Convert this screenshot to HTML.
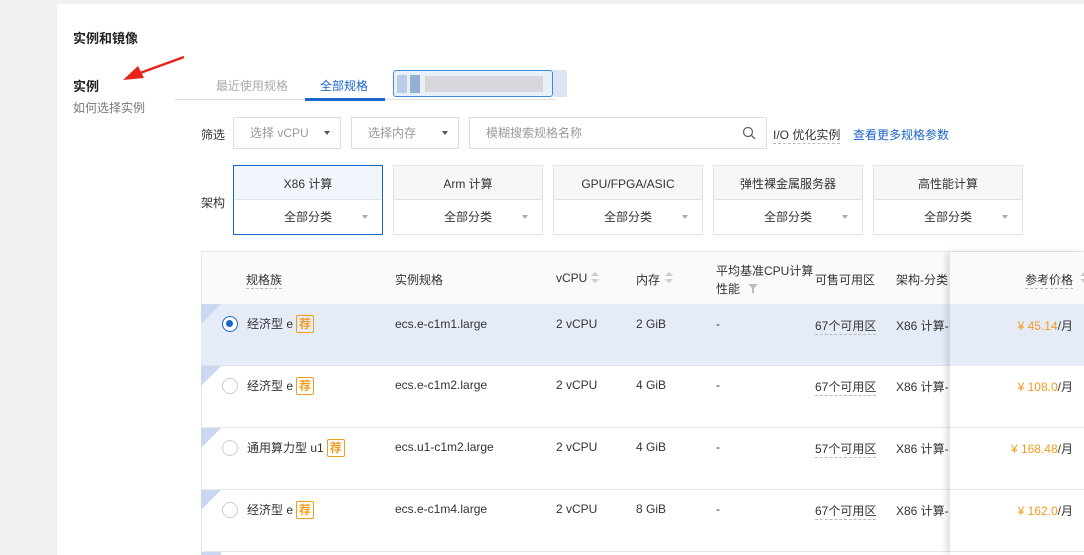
<!DOCTYPE html>
<html><head><meta charset="utf-8"><style>
*{margin:0;padding:0;box-sizing:border-box}
body{width:1084px;height:555px;overflow:hidden;background:#f0f1f3;font-family:"Liberation Sans","Noto Sans CJK SC",sans-serif;font-size:12px;color:#333;position:relative}
.a{position:absolute;white-space:nowrap}
#panel{position:absolute;left:57px;top:4px;width:1027px;height:551px;background:#fff}
.sel{position:absolute;border:1px solid #ddd;background:#fff;color:#999;height:32px;line-height:30px;padding-left:16px}
.tri{position:absolute;width:0;height:0;border-left:3.5px solid transparent;border-right:3.5px solid transparent;border-top:4px solid #555}
.tri.g{border-top-color:#aaa}
.card{position:absolute;top:165px;width:150px;height:70px;border:1px solid #e3e3e3;text-align:center;color:#333}
.card .t{height:34px;line-height:36px;background:#f7f7f7;border-bottom:1px solid #e3e3e3}
.card .b{height:34px;line-height:34px;position:relative}
.card.on{border-color:#1b64c9}
.card.on .t{background:#f1f5fc;border-bottom-color:#dce5f3}
.row{position:absolute;left:201px;width:883px;height:62px;border-bottom:1px solid #e8e8e8}
.corner{position:absolute;left:0;top:0;width:0;height:0;border-top:20px solid #c9d7f1;border-right:20px solid transparent}
.radio{position:absolute;left:21px;top:12px;width:16px;height:16px;border:1px solid #ccc;border-radius:50%;background:#fff}
.tag{display:inline-block;border:1px solid #f39c1f;color:#f39c1f;font-size:12px;line-height:16px;padding:0 2px;margin-left:3px;border-radius:2px;font-weight:bold}
.dash{border-bottom:1px dashed #bbb}
.pr{color:#f39c1f}
.sort{position:absolute;width:0;height:0;border-left:4px solid transparent;border-right:4px solid transparent}
</style></head><body>
<div id="panel"></div>
<div class="a" style="left:73px;top:28px;font-size:13px;font-weight:bold;color:#222">实例和镜像</div>
<div class="a" style="left:73px;top:76px;font-size:13px;font-weight:bold;color:#222">实例</div>
<div class="a" style="left:73px;top:99px;color:#777">如何选择实例</div>
<svg class="a" style="left:118px;top:54px" width="70" height="30"><path d="M66 3 L22 19" stroke="#e8231b" stroke-width="2.5"/><path d="M5 26 L20 12 L26 24 Z" fill="#e8231b"/></svg>
<div class="a" style="left:216px;top:77px;color:#aaa">最近使用规格</div>
<div class="a" style="left:320px;top:77px;color:#1b64c9">全部规格</div>
<div class="a" style="left:175px;top:99px;width:380px;height:1px;background:#ddd"></div>
<div class="a" style="left:305px;top:98px;width:80px;height:3px;background:#1b64c9"></div>
<div class="a" style="left:393px;top:70px;width:160px;height:27px;border:1px solid #3a8de0;border-radius:3px;background:#eaf0f8"></div>
<div class="a" style="left:397px;top:75px;width:10px;height:18px;background:#b8cde8"></div>
<div class="a" style="left:410px;top:75px;width:10px;height:18px;background:#93afd3"></div>
<div class="a" style="left:425px;top:76px;width:118px;height:16px;background:#d8d8dc"></div>
<div class="a" style="left:553px;top:70px;width:14px;height:27px;background:#dfe4f2"></div>
<div class="a" style="left:201px;top:126px;color:#333">筛选</div>
<div class="sel" style="left:233px;top:117px;width:108px">选择 vCPU<div class="tri" style="left:90px;top:13px"></div></div>
<div class="sel" style="left:351px;top:117px;width:108px">选择内存<div class="tri" style="left:90px;top:13px"></div></div>
<div class="sel" style="left:469px;top:117px;width:298px;padding-left:16px">模糊搜索规格名称
<svg style="position:absolute;left:272px;top:8px" width="14" height="14"><circle cx="6" cy="6" r="4.5" stroke="#666" stroke-width="1.3" fill="none"/><path d="M9.3 9.3 L13 13" stroke="#666" stroke-width="1.4"/></svg></div>
<div class="a dash" style="left:773px;top:126px;color:#333">I/O 优化实例</div>
<div class="a" style="left:853px;top:126px;color:#1b64c9">查看更多规格参数</div>
<div class="a" style="left:201px;top:194px">架构</div>
<div class="card on" style="left:233px"><div class="t">X86 计算</div><div class="b">全部分类<div class="tri g" style="left:128px;top:15px"></div></div></div>
<div class="card" style="left:393px"><div class="t">Arm 计算</div><div class="b">全部分类<div class="tri g" style="left:128px;top:15px"></div></div></div>
<div class="card" style="left:553px"><div class="t">GPU/FPGA/ASIC</div><div class="b">全部分类<div class="tri g" style="left:128px;top:15px"></div></div></div>
<div class="card" style="left:713px"><div class="t">弹性裸金属服务器</div><div class="b">全部分类<div class="tri g" style="left:128px;top:15px"></div></div></div>
<div class="card" style="left:873px"><div class="t">高性能计算</div><div class="b">全部分类<div class="tri g" style="left:128px;top:15px"></div></div></div>
<div class="a" style="left:201px;top:251px;width:883px;height:53px;background:#fafafa;border-top:1px solid #e8e8e8;border-left:1px solid #e8e8e8"></div>
<div class="a" style="left:201px;top:251px;width:1px;height:304px;background:#e8e8e8"></div>
<div class="a dash" style="left:246px;top:271px">规格族</div>
<div class="a" style="left:395px;top:271px">实例规格</div>
<div class="a" style="left:556px;top:271px">vCPU</div>
<div class="sort" style="left:591px;top:272px;border-bottom:4px solid #ccc"></div><div class="sort" style="left:591px;top:279px;border-top:4px solid #ccc"></div>
<div class="a" style="left:636px;top:271px">内存</div>
<div class="sort" style="left:665px;top:272px;border-bottom:4px solid #ccc"></div><div class="sort" style="left:665px;top:279px;border-top:4px solid #ccc"></div>
<div class="a" style="left:716px;top:262px;line-height:18px">平均基准CPU计算<br>性能</div>
<svg class="a" style="left:748px;top:284px" width="10" height="9"><path d="M0 0 H10 L6 4 V9 H4 V4 Z" fill="#bbb"/></svg>
<div class="a" style="left:815px;top:271px">可售可用区</div>
<div class="a" style="left:896px;top:271px">架构-分类</div>
<div class="row" style="top:304px;background:#e5ecf8;border-bottom-color:#dde4f0"><div class="corner"></div><div class="radio" style="border:1.5px solid #1b64c9"><div style="position:absolute;left:3px;top:3px;width:7px;height:7px;border-radius:50%;background:#1b64c9"></div></div></div>
<div class="row" style="top:366px"><div class="corner"></div><div class="radio"></div></div>
<div class="row" style="top:428px"><div class="corner"></div><div class="radio"></div></div>
<div class="row" style="top:490px"><div class="corner"></div><div class="radio"></div></div>
<div class="a" style="left:201px;top:552px;width:20px;height:3px;background:#c9d7f1"></div>
<div class="a" style="left:247px;top:315px">经济型 e<span class="tag">荐</span></div>
<div class="a" style="left:247px;top:377px">经济型 e<span class="tag">荐</span></div>
<div class="a" style="left:247px;top:439px">通用算力型 u1<span class="tag">荐</span></div>
<div class="a" style="left:247px;top:501px">经济型 e<span class="tag">荐</span></div>
<div class="a" style="left:395px;top:317px">ecs.e-c1m1.large</div>
<div class="a" style="left:395px;top:378px">ecs.e-c1m2.large</div>
<div class="a" style="left:395px;top:440px">ecs.u1-c1m2.large</div>
<div class="a" style="left:395px;top:502px">ecs.e-c1m4.large</div>
<div class="a" style="left:556px;top:317px">2 vCPU</div><div class="a" style="left:636px;top:317px">2 GiB</div><div class="a" style="left:716px;top:317px">-</div>
<div class="a" style="left:556px;top:378px">2 vCPU</div><div class="a" style="left:636px;top:378px">4 GiB</div><div class="a" style="left:716px;top:378px">-</div>
<div class="a" style="left:556px;top:440px">2 vCPU</div><div class="a" style="left:636px;top:440px">4 GiB</div><div class="a" style="left:716px;top:440px">-</div>
<div class="a" style="left:556px;top:502px">2 vCPU</div><div class="a" style="left:636px;top:502px">8 GiB</div><div class="a" style="left:716px;top:502px">-</div>
<div class="a dash" style="left:815px;top:317px">67个可用区</div><div class="a" style="left:896px;top:317px">X86 计算-</div>
<div class="a dash" style="left:815px;top:378px">67个可用区</div><div class="a" style="left:896px;top:378px">X86 计算-</div>
<div class="a dash" style="left:815px;top:440px">57个可用区</div><div class="a" style="left:896px;top:440px">X86 计算-</div>
<div class="a dash" style="left:815px;top:502px">67个可用区</div><div class="a" style="left:896px;top:502px">X86 计算-</div>
<div class="a" style="left:950px;top:252px;width:134px;height:303px;box-shadow:-4px 0 6px rgba(0,0,0,.12)"></div>
<div class="a" style="left:950px;top:252px;width:134px;height:52px;background:#fafafa"></div>
<div class="a dash" style="left:1025px;top:271px">参考价格</div>
<div class="sort" style="left:1080px;top:272px;border-bottom:4px solid #ccc"></div><div class="sort" style="left:1080px;top:279px;border-top:4px solid #ccc"></div>
<div class="a" style="left:950px;top:304px;width:134px;height:62px;background:#e5ecf8"></div>
<div class="a" style="left:950px;top:366px;width:134px;height:189px;background:#fff"></div>
<div class="a" style="left:950px;top:427px;width:134px;height:1px;background:#e8e8e8"></div>
<div class="a" style="left:950px;top:489px;width:134px;height:1px;background:#e8e8e8"></div>
<div class="a" style="left:950px;top:551px;width:134px;height:1px;background:#e8e8e8"></div>
<div class="a" style="right:11px;top:317px"><span class="pr">¥ 45.14</span>/月</div>
<div class="a" style="right:11px;top:378px"><span class="pr">¥ 108.0</span>/月</div>
<div class="a" style="right:11px;top:440px"><span class="pr">¥ 168.48</span>/月</div>
<div class="a" style="right:11px;top:502px"><span class="pr">¥ 162.0</span>/月</div>
</body></html>
